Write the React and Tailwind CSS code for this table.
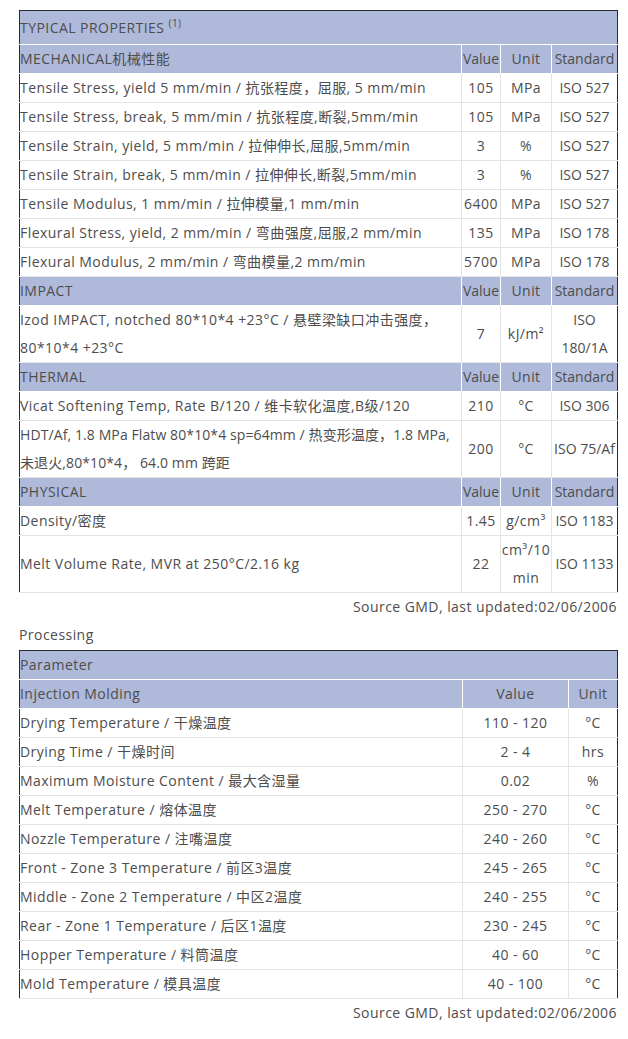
import React from 'react';

const FONT = "font-['Open_Sans','Noto_Sans_CJK_SC',sans-serif]";

const typical = [
  {
    head: 'MECHANICAL机械性能',
    rows: [
      ['Tensile Stress, yield 5 mm/min / 抗张程度，屈服, 5 mm/min', '105', 'MPa', 'ISO 527'],
      ['Tensile Stress, break, 5 mm/min / 抗张程度,断裂,5mm/min', '105', 'MPa', 'ISO 527'],
      ['Tensile Strain, yield, 5 mm/min / 拉伸伸长,屈服,5mm/min', '3', '%', 'ISO 527'],
      ['Tensile Strain, break, 5 mm/min / 拉伸伸长,断裂,5mm/min', '3', '%', 'ISO 527'],
      ['Tensile Modulus, 1 mm/min / 拉伸模量,1 mm/min', '6400', 'MPa', 'ISO 527'],
      ['Flexural Stress, yield, 2 mm/min / 弯曲强度,屈服,2 mm/min', '135', 'MPa', 'ISO 178'],
      ['Flexural Modulus, 2 mm/min / 弯曲模量,2 mm/min', '5700', 'MPa', 'ISO 178'],
    ],
  },
  {
    head: 'IMPACT',
    rows: [
      ['Izod IMPACT, notched 80*10*4 +23°C / 悬壁梁缺口冲击强度， 80*10*4 +23°C', '7', <>kJ/m²</>, 'ISO 180/1A'],
    ],
  },
  {
    head: 'THERMAL',
    rows: [
      ['Vicat Softening Temp, Rate B/120 / 维卡软化温度,B级/120', '210', '°C', 'ISO 306'],
      ['HDT/Af, 1.8 MPa Flatw 80*10*4 sp=64mm / 热变形温度，1.8 MPa, 未退火,80*10*4， 64.0 mm 跨距', '200', '°C', 'ISO 75/Af', true],
    ],
  },
  {
    head: 'PHYSICAL',
    rows: [
      ['Density/密度', '1.45', 'g/cm³', 'ISO 1183'],
      ['Melt Volume Rate, MVR at 250°C/2.16 kg', '22', 'cm³/10 min', 'ISO 1133'],
    ],
  },
];

const processing = [
  ['Drying Temperature / 干燥温度', '110 - 120', '°C'],
  ['Drying Time / 干燥时间', '2 - 4', 'hrs'],
  ['Maximum Moisture Content / 最大含湿量', '0.02', '%'],
  ['Melt Temperature / 熔体温度', '250 - 270', '°C'],
  ['Nozzle Temperature / 注嘴温度', '240 - 260', '°C'],
  ['Front - Zone 3 Temperature / 前区3温度', '245 - 265', '°C'],
  ['Middle - Zone 2 Temperature / 中区2温度', '240 - 255', '°C'],
  ['Rear - Zone 1 Temperature / 后区1温度', '230 - 245', '°C'],
  ['Hopper Temperature / 料筒温度', '40 - 60', '°C'],
  ['Mold Temperature / 模具温度', '40 - 100', '°C'],
];

// header cells: light periwinkle with white rules
const th = 'bg-[#afb9da] font-normal p-0 h-[28px] border border-white';
const td = 'p-0 h-[28px] border border-[#e4e4e4] align-middle';

export default function App() {
  return (
    <div className={`${FONT} text-[14px] tracking-[0.45px] leading-[28px] text-[#4d4d4d] bg-white w-[628px] min-h-[1039px] pt-[10px] pl-[19px]`}>
      <table className="w-[598px] table-fixed border-collapse border border-[#2b2b2b]">
        <colgroup>
          <col className="w-[442px]" />
          <col className="w-[39px]" />
          <col className="w-[51px]" />
          <col className="w-[66px]" />
        </colgroup>
        <tbody>
          <tr>
            <th colSpan={4} className={`${th} text-left h-[34px] border-t-[#2b2b2b] border-l-[#2b2b2b] border-r-[#2b2b2b]`}>
              TYPICAL PROPERTIES <sup className="text-[10px] -top-[6px]">(1)</sup>
            </th>
          </tr>
          {typical.map((sec) => (
            <React.Fragment key={sec.head}>
              <tr>
                <th className={`${th} text-left border-l-[#2b2b2b]`}>{sec.head}</th>
                <th className={`${th} text-center tracking-normal`}>Value</th>
                <th className={`${th} text-center`}>Unit</th>
                <th className={`${th} text-center tracking-normal border-r-[#2b2b2b]`}>Standard</th>
              </tr>
              {sec.rows.map((r, i) => (
                <tr key={i}>
                  <td className={`${td} text-left border-l-[#2b2b2b] ${r[4] ? 'tracking-[0.1px]' : ''}`}>{r[0]}</td>
                  <td className={`${td} text-center`}>{r[1]}</td>
                  <td className={`${td} text-center`}>{r[2]}</td>
                  <td className={`${td} text-center tracking-normal border-r-[#2b2b2b]`}>{r[3]}</td>
                </tr>
              ))}
            </React.Fragment>
          ))}
        </tbody>
      </table>
      <div className="w-[598px] text-right leading-[28px]">Source GMD, last updated:02/06/2006</div>

      <div className="leading-[28px]">Processing</div>
      <table className="mt-[1px] w-[598px] table-fixed border-collapse border border-[#2b2b2b]">
        <colgroup>
          <col className="w-[443px]" />
          <col className="w-[106px]" />
          <col className="w-[49px]" />
        </colgroup>
        <tbody>
          <tr>
            <th colSpan={3} className={`${th} text-left border-t-[#2b2b2b] border-l-[#2b2b2b] border-r-[#2b2b2b]`}>Parameter</th>
          </tr>
          <tr>
            <th className={`${th} text-left border-l-[#2b2b2b]`}>Injection Molding</th>
            <th className={`${th} text-center`}>Value</th>
            <th className={`${th} text-center border-r-[#2b2b2b]`}>Unit</th>
          </tr>
          {processing.map((r, i) => (
            <tr key={i}>
              <td className={`${td} text-left border-l-[#2b2b2b]`}>{r[0]}</td>
              <td className={`${td} text-center`}>{r[1]}</td>
              <td className={`${td} text-center border-r-[#2b2b2b]`}>{r[2]}</td>
            </tr>
          ))}
        </tbody>
      </table>
      <div className="w-[598px] text-right leading-[28px]">Source GMD, last updated:02/06/2006</div>
    </div>
  );
}
